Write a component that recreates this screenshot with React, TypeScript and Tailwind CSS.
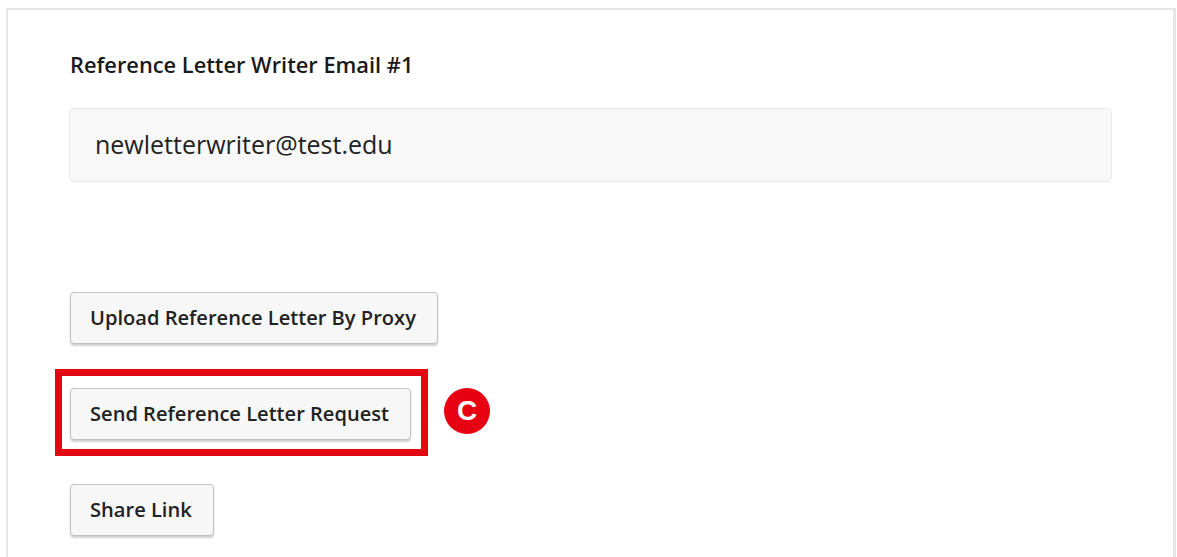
import React from "react";

const btn =
  "h-[52px] rounded-[4px] border border-[#c2c2c2] bg-[#f7f7f7] pl-[19px] pr-[21px] text-[20.1px] font-semibold text-[#222] shadow-[0_2px_2px_rgba(0,0,0,0.18)]";

export default function App() {
  return (
    <div
      className="min-h-[557px] bg-white pl-[6px] pt-[8px]"
      style={{ fontFamily: '"Open Sans", "Noto Sans", sans-serif' }}
    >
      <div className="h-[560px] w-[1170px] border-2 border-r-[3px] border-b-0 border-[#e6e6e6] pl-[61px] pt-[40px]">
        <div className="ml-px text-[21.8px] font-semibold leading-[30px] text-[#1a1a1a]">
          Reference Letter Writer Email #1
        </div>
        <div className="mt-[28px] flex h-[74px] w-[1043px] items-center rounded-[5px] border border-[#e8e8e8] bg-[#f8f8f8] pl-[25px] text-[25px] text-[#222]">
          newletterwriter@test.edu
        </div>
        <div className="mt-[110px] flex flex-col items-start gap-[44px] pl-px">
          <button className={btn}>Upload Reference Letter By Proxy</button>
          <div className="relative">
            <button className={btn}>Send Reference Letter Request</button>
            <div className="pointer-events-none absolute left-[-15px] top-[-19px] h-[87px] w-[373px] border-[7px] border-[#e30613]" />
            <div
              className="absolute left-[374px] top-0 flex h-[46px] w-[46px] items-center justify-center rounded-full bg-[#e60012] text-[28px] font-bold leading-none text-white"
              style={{ fontFamily: '"Liberation Sans", Arial, sans-serif' }}
            >
              C
            </div>
          </div>
          <button className={btn}>Share Link</button>
        </div>
      </div>
    </div>
  );
}
